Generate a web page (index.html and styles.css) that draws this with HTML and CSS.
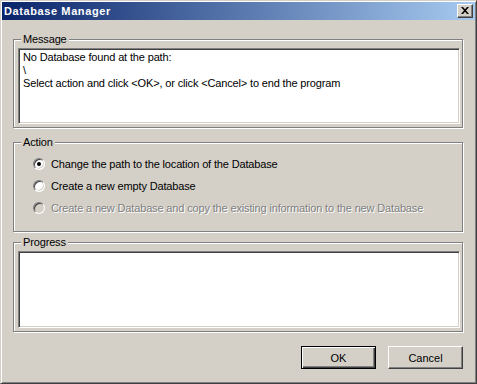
FILE: index.html
```html
<!DOCTYPE html>
<html lang="en">
<head>
  <meta charset="UTF-8" />
  <title>Database Manager</title>
  <link rel="stylesheet" href="styles.css">
</head>
<body>

<div class="window">
  <div class="titlebar">
    <span class="title">Database Manager</span>
    <button class="close" aria-label="Close">
      <svg width="8" height="7" viewBox="0 0 8 7"><path d="M0 0h2l2 2.3L6 0h2L5 3.5 8 7H6L4 4.7 2 7H0l3-3.5z" fill="#000"/></svg>
    </button>
  </div>

  <div class="content">
    <div class="group message-group">
      <span class="group-label">Message</span>
      <div class="edit message-box">
        No Database found at the path:<br>
        \<br>
        Select action and click &lt;OK&gt;, or click &lt;Cancel&gt; to end the program
      </div>
    </div>

    <div class="group action-group">
      <span class="group-label">Action</span>
      <label class="radio-row">
        <span class="radio checked"></span>
        <span>Change the path to the location of the Database</span>
      </label>
      <label class="radio-row">
        <span class="radio"></span>
        <span>Create a new empty Database</span>
      </label>
      <label class="radio-row disabled">
        <span class="radio"></span>
        <span>Create a new Database and copy the existing information to the new Database</span>
      </label>
    </div>

    <div class="group progress-group">
      <span class="group-label">Progress</span>
      <div class="edit progress-box"></div>
    </div>

    <div class="buttons">
      <button class="btn default">OK</button>
      <button class="btn">Cancel</button>
    </div>
  </div>
</div>

</body>
</html>
```

FILE: styles.css
```css
* { margin: 0; padding: 0; box-sizing: border-box; }
body {
  background: #d4d0c8;
  font-family: "Liberation Sans", Arial, sans-serif;
  font-size: 11px; color: #000; letter-spacing: -0.15px;
}
.window {
  width: 477px; height: 384px; padding: 1px;
  background: #d4d0c8;
  border: 1px solid; border-color: #d4d0c8 #404040 #404040 #d4d0c8;
  box-shadow: inset 1px 1px 0 #fff, inset -1px -1px 0 #808080;
  display: flex; flex-direction: column;
}
.titlebar {
  height: 18px; display: flex; align-items: center; justify-content: space-between;
  background: linear-gradient(to right, #0a246a, #a6caf0);
  padding: 0 2px 0 2px;
}
.title { color: #fff; font-weight: 700; font-size: 11px; letter-spacing: 0.6px; }
.close {
  width: 16px; height: 14px; background: #d4d0c8;
  border: 1px solid; border-color: #fff #404040 #404040 #fff;
  box-shadow: inset -1px -1px 0 #808080;
  display: flex; align-items: center; justify-content: center;
  padding: 0 0 1px 0;
}
.content { flex: 1; padding: 0 12px 0 11px; display: flex; flex-direction: column; }
.group {
  position: relative;
  border: 1px solid #808080;
  box-shadow: 1px 1px 0 #fff, inset 1px 1px 0 #fff;
}
.group-label {
  position: absolute; top: -7px; left: 7px;
  padding: 0 2px; line-height: 13px; background: #d4d0c8;
}
.edit {
  background: #fff;
  border: 1px solid; border-color: #808080 #fff #fff #808080;
  box-shadow: inset 1px 1px 0 #404040, inset -1px -1px 0 #d4d0c8;
}
.message-group { margin-top: 19px; height: 89px; padding: 8px 2px 3px 4px; }
.message-box { height: 76px; padding: 2px 4px; line-height: 13px; }
.action-group { margin-top: 14px; height: 90px; padding: 10px 0 12px 19px; }
.radio-row { display: flex; align-items: center; gap: 6px; height: 22px; }
.radio {
  width: 12px; height: 12px; border-radius: 50%; flex: none;
  background: #fff; position: relative;
  border: 1px solid; border-color: #808080 #fff #fff #808080;
  box-shadow: inset 1px 1px 0 #404040, inset -1px -1px 0 #d4d0c8;
}
.radio.checked::after {
  content: ""; position: absolute; left: 3px; top: 3px;
  width: 4px; height: 4px; border-radius: 50%; background: #000;
}
.radio-row.disabled { color: #808080; text-shadow: 1px 1px 0 #fff; }
.radio-row.disabled .radio { background: #d4d0c8; }
.progress-group { margin-top: 10px; height: 90px; padding: 8px 2px 3px 4px; }
.progress-box { height: 77px; }
.buttons { display: flex; justify-content: flex-end; gap: 12px; margin-top: 14px; }
.btn {
  width: 75px; height: 23px; background: #d4d0c8;
  font-family: "Liberation Sans", Arial, sans-serif; font-size: 11px; color: #000;
  border: 1px solid; border-color: #fff #404040 #404040 #fff;
  box-shadow: inset -1px -1px 0 #808080;
}
.btn.default {
  border: 1px solid #000;
  box-shadow: inset 1px 1px 0 #fff, inset -1px -1px 0 #404040, inset -2px -2px 0 #808080;
}
```
